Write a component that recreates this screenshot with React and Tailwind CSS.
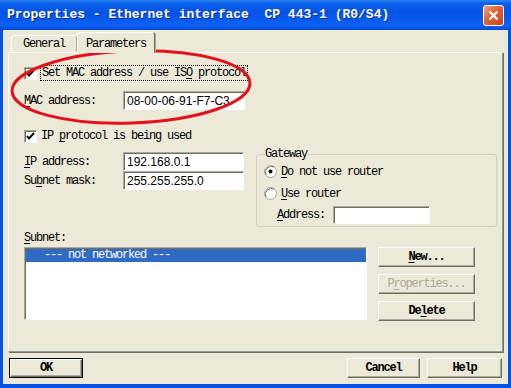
import React from 'react';

const raised =
  'bg-[#ECE9D8] border border-t-white border-l-white border-r-[#716F64] border-b-[#716F64] shadow-[inset_-1px_-1px_0_#ACA899]';
const sunken =
  'bg-white border border-t-[#ACA899] border-l-[#ACA899] border-r-white border-b-white shadow-[inset_1px_1px_0_#716F64]';

function U({ children }) {
  return <span className="underline underline-offset-2">{children}</span>;
}

function CheckBox() {
  return (
    <div className={`w-[13px] h-[13px] shrink-0 flex items-center justify-center ${sunken}`}>
      <svg width="9" height="9" viewBox="0 0 9 9">
        <path d="M1 4 L3 6.5 L8 1" fill="none" stroke="#000" strokeWidth="2" />
      </svg>
    </div>
  );
}

function Radio({ on }) {
  return (
    <svg width="13" height="13" viewBox="0 0 13 13" className="shrink-0">
      <circle cx="6.5" cy="6.5" r="6" fill="#fff" stroke="#ACA899" />
      <path d="M2 10 A6 6 0 0 1 10 2" fill="none" stroke="#716F64" />
      {on && <circle cx="6.5" cy="6.5" r="2" fill="#000" />}
    </svg>
  );
}

function Field({ value, w, h = 'h-[19px]', gray }) {
  return (
    <div className={`${w} ${h} ${sunken} ${gray ? 'bg-[#ECE9D8]' : ''} flex items-center pl-[3px] font-[family-name:Liberation_Sans,Arial,sans-serif] text-[12px] tracking-normal`}>
      {value}
    </div>
  );
}

function Btn({ children, w, dim, def }) {
  const inner = (
    <div className={`${def ? 'w-full h-full' : `${w} h-[20px]`} ${raised} flex items-center justify-center ${dim ? 'text-[#ACA899]' : 'text-black font-bold'}`}>
      {children}
    </div>
  );
  if (def) return <div className={`${w} h-[20px] border border-black`}>{inner}</div>;
  return inner;
}

export default function App() {
  return (
    <div className="relative w-[511px] h-[388px] overflow-hidden bg-[#0654E4] flex flex-col font-[family-name:Liberation_Mono,Courier_New,monospace] text-[12px] tracking-[-1.2px] text-black">
      <div className="h-[30px] shrink-0 flex items-center pl-[7px] pr-[7px] bg-[linear-gradient(180deg,#2C86F5_0%,#0A5DEA_12%,#0553E6_45%,#0A62F2_85%,#0352E2_95%,#0244C9_100%)]">
        <span className="whitespace-pre text-white font-bold text-[13px] tracking-[0px] [text-shadow:1px_1px_0_#0B2F9A]">
          Properties - Ethernet interface  CP 443-1 (R0/S4)
        </span>
        <div className="ml-auto w-[21px] h-[21px] rounded-[3px] border border-white bg-[linear-gradient(135deg,#F0A07E_0%,#E0623A_45%,#C6441C_100%)] flex items-center justify-center">
          <svg width="11" height="11" viewBox="0 0 11 11">
            <path d="M1.5 1.5 L9.5 9.5 M9.5 1.5 L1.5 9.5" stroke="#fff" strokeWidth="2.2" />
          </svg>
        </div>
      </div>

      <div className="flex-1 mx-[3px] mb-[4px] bg-[#ECE9D8] flex flex-col px-[5px]">
        <div className="h-[20px] mt-[2px] flex items-end pl-[3px]">
          <div className="w-[66px] h-[17px] flex items-center justify-center border border-b-0 border-t-white border-l-white border-r-[#ACA899] rounded-t-[3px]">
            General
          </div>
          <div className="relative z-10 w-[78px] h-[21px] -mb-[1px] bg-[#ECE9D8] flex items-start pt-[2px] justify-center border border-b-0 border-t-white border-l-white border-r-[#716F64] rounded-t-[3px] shadow-[1px_0_0_#ACA899]">
            Parameters
          </div>
        </div>

        <div className="h-[300px] border border-t-white border-l-white border-r-[#919B9C] border-b-[#919B9C] shadow-[1px_1px_0_#716F64] pl-[15px] flex flex-col">
          <div className="mt-[12px] h-[16px] flex items-center">
            <CheckBox />
            <span className="ml-[3px] h-[16px] flex items-center px-[1px] border border-dotted border-black whitespace-pre">
              Set MAC address / use IS<U>O</U> protocol
            </span>
          </div>

          <div className="mt-[10px] flex items-center">
            <span className="w-[99px]"><U>M</U>AC address:</span>
            <Field value="08-00-06-91-F7-C3" w="w-[122px]" />
          </div>

          <div className="mt-[18px] h-[16px] flex items-center">
            <CheckBox />
            <span className="ml-[4px] whitespace-pre">IP <U>p</U>rotocol is being used</span>
          </div>

          <div className="mt-[6px] flex">
            <div className="w-[220px] pt-[2px] flex flex-col">
              <div className="flex items-center">
                <span className="w-[99px]"><U>I</U>P address:</span>
                <Field value="192.168.0.1" w="w-[121px]" />
              </div>
              <div className="flex items-center">
                <span className="w-[99px]">Su<U>b</U>net mask:</span>
                <Field value="255.255.255.0" w="w-[121px]" />
              </div>
            </div>

            <div className="relative ml-[12px] mt-[4px] w-[241px] h-[73px] border border-[#D0D0BF] rounded-[3px] flex flex-col">
              <span className="absolute -top-[8px] left-[7px] bg-[#ECE9D8] px-[1px] leading-[14px]">Gateway</span>
              <div className="mt-[10px] pl-[7px] h-[13px] flex items-center">
                <Radio on />
                <span className="ml-[4px]"><U>D</U>o not use router</span>
              </div>
              <div className="mt-[9px] pl-[7px] h-[13px] flex items-center">
                <Radio />
                <span className="ml-[4px]"><U>U</U>se router</span>
              </div>
              <div className="mt-[6px] pl-[20px] flex items-center">
                <span className="w-[56px]"><U>A</U>ddress:</span>
                <Field value="" w="w-[97px]" h="h-[18px]" gray />
              </div>
            </div>
          </div>

          <div className="mt-[4px] h-[14px] leading-[14px]"><U>S</U>ubnet:</div>

          <div className="mt-[2px] flex">
            <div className={`w-[343px] h-[73px] ${sunken} pt-[1px] pl-[1px]`}>
              <div className="h-[13px] bg-[#316AC5] text-white pl-[18px] leading-[13px] whitespace-pre">
                --- not networked ---
              </div>
            </div>
            <div className="ml-[11px] flex flex-col gap-[7px]">
              <Btn w="w-[97px]"><U>N</U>ew...</Btn>
              <Btn w="w-[97px]" dim>P<U>r</U>operties...</Btn>
              <Btn w="w-[97px]">De<U>l</U>ete</Btn>
            </div>
          </div>
        </div>

        <div className="mt-[6px] flex pl-[1px] pr-[1px]">
          <Btn w="w-[74px]" def>OK</Btn>
          <div className="ml-auto flex gap-[7px]">
            <Btn w="w-[73px]">Cancel</Btn>
            <Btn w="w-[75px]">Help</Btn>
          </div>
        </div>
      </div>

      <svg className="absolute left-0 top-0 pointer-events-none" width="511" height="388">
        <ellipse cx="131" cy="87" rx="119" ry="36" fill="none" stroke="#E4131B" strokeWidth="3" transform="rotate(-2 131 87)" />
      </svg>
    </div>
  );
}
